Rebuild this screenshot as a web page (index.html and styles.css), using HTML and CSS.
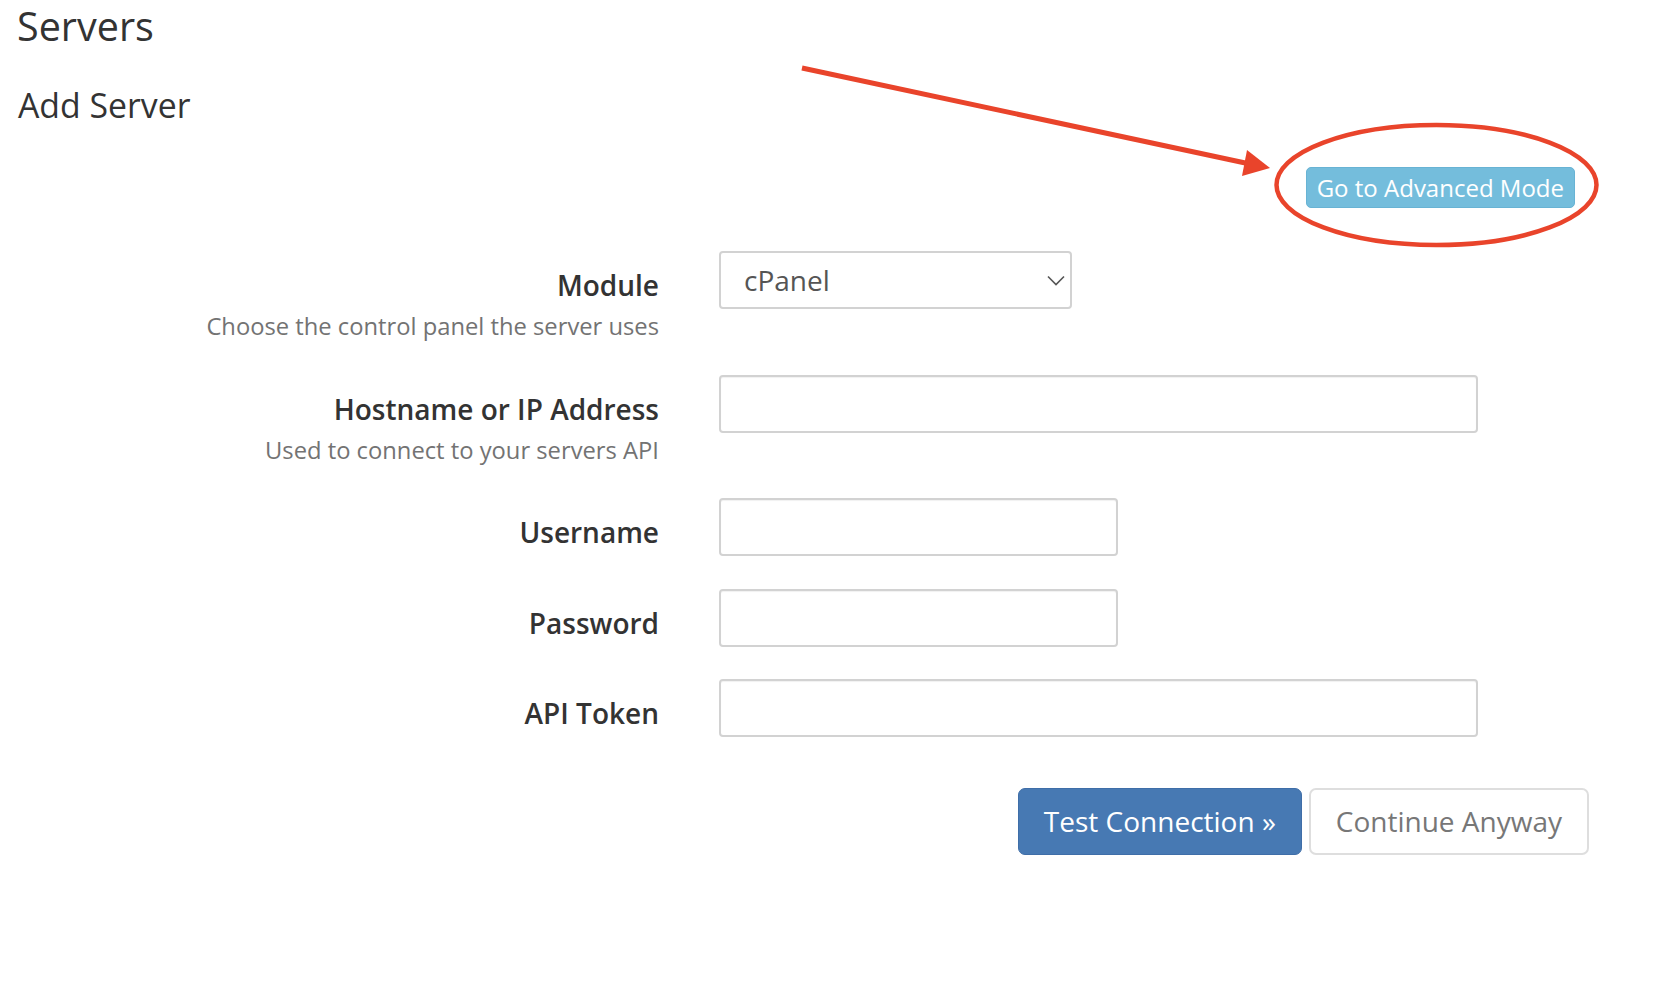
FILE: index.html
```html
<!DOCTYPE html>
<html lang="en">
<head>
<meta charset="utf-8">
<title>Servers - Add Server</title>
<link rel="stylesheet" href="styles.css">
</head>
<body>
<div class="page">
  <h1 class="title">Servers</h1>
  <h2 class="subtitle">Add Server</h2>
  <div class="mode-bar">
    <button class="btn btn-info" type="button">Go to Advanced Mode</button>
  </div>
  <form class="form">
    <div class="row">
      <div class="label-col">
        <label class="label">Module</label>
        <div class="help">Choose the control panel the server uses</div>
      </div>
      <div class="field-col">
        <div class="select-wrap">
          <select class="control select"><option>cPanel</option></select>
          <svg class="chev" width="18" height="11" viewBox="0 0 18 11"><path d="M1 1.5 L9 9.5 L17 1.5" fill="none" stroke="#555" stroke-width="1.6"/></svg>
        </div>
      </div>
    </div>
    <div class="row">
      <div class="label-col">
        <label class="label">Hostname or IP Address</label>
        <div class="help">Used to connect to your servers API</div>
      </div>
      <div class="field-col"><input class="control wide" type="text"></div>
    </div>
    <div class="row">
      <div class="label-col"><label class="label">Username</label></div>
      <div class="field-col"><input class="control narrow" type="text"></div>
    </div>
    <div class="row">
      <div class="label-col"><label class="label">Password</label></div>
      <div class="field-col"><input class="control narrow" type="password"></div>
    </div>
    <div class="row">
      <div class="label-col"><label class="label">API Token</label></div>
      <div class="field-col"><input class="control wide" type="text"></div>
    </div>
  </form>
  <div class="actions">
    <button class="btn btn-primary" type="button">Test Connection &raquo;</button>
    <button class="btn btn-default" type="button">Continue Anyway</button>
  </div>
  <svg class="annotation" width="1666" height="260" viewBox="0 0 1666 260">
    <line x1="802" y1="68" x2="1250" y2="164" stroke="#e9442b" stroke-width="5" stroke-linecap="butt"/>
    <polygon points="1270,168 1247,150 1242,176" fill="#e9442b"/>
    <ellipse cx="1436.5" cy="185" rx="160" ry="60" fill="none" stroke="#e9442b" stroke-width="4.5"/>
  </svg>
</div>
</body>
</html>
```
FILE: styles.css
```css
* { box-sizing: border-box; }
html, body { margin: 0; padding: 0; background: #fff; }
body {
  font-family: "Open Sans", "Liberation Sans", sans-serif;
  color: #333;
}
.page {
  position: relative;
  width: 1666px;
  min-height: 992px;
  padding-left: 17px;
}
.title {
  margin: 0;
  font-size: 39.5px;
  font-weight: 400;
  line-height: 53px;
}
.subtitle {
  margin: 30px 0 0;
  font-size: 33.8px;
  font-weight: 400;
  line-height: 45px;
  padding-left: 1px;
}
.mode-bar {
  display: flex;
  justify-content: flex-end;
  padding-right: 91px;
  margin-top: 39px;
}
.btn {
  font-family: "Open Sans", "Liberation Sans", sans-serif;
  border: 1px solid transparent;
  cursor: pointer;
  white-space: nowrap;
}
.btn-info {
  font-size: 24px;
  line-height: 33px;
  padding: 3px 10px;
  background: #74bddc;
  border-color: #68b3d4;
  color: #fff;
  border-radius: 5px;
}
.form {
  display: flex;
  flex-direction: column;
  gap: 32.5px;
  margin-top: 43px;
}
.row {
  display: grid;
  grid-template-columns: 642px 1fr;
  column-gap: 60px;
  align-items: start;
}
.label-col {
  text-align: right;
  padding-top: 16px;
}
.label {
  display: block;
  font-size: 28px;
  font-weight: 600;
  line-height: 36px;
  color: #333;
}
.help {
  margin-top: 7px;
  font-size: 23.75px;
  line-height: 32px;
  color: #737373;
}
.control {
  display: block;
  height: 58px;
  border: 2px solid #d2d2d2;
  border-radius: 4px;
  background: #fff;
  box-shadow: inset 0 1px 1px rgba(0, 0, 0, 0.06);
  font-family: "Open Sans", "Liberation Sans", sans-serif;
  font-size: 28px;
  color: #555;
  outline: none;
}
.wide { width: 759px; }
.narrow { width: 399px; }
.select-wrap {
  position: relative;
  width: 353px;
}
.select {
  width: 353px;
  padding: 0 40px 0 23px;
  appearance: none;
  -webkit-appearance: none;
  box-shadow: none;
}
.chev {
  position: absolute;
  left: 328px;
  top: 24px;
  pointer-events: none;
}
.actions {
  display: flex;
  justify-content: flex-end;
  gap: 7px;
  padding-right: 77px;
  margin-top: 51px;
}
.btn-primary,
.btn-default {
  font-size: 28px;
  line-height: 39px;
  padding: 13px 25px;
  border-radius: 7px;
}
.btn-primary {
  background: #4779b3;
  border-color: #3f6ea8;
  color: #fff;
}
.btn-default {
  background: #fff;
  border: 2px solid #dedede;
  padding: 12px 25px;
  color: #777;
}
.annotation {
  position: absolute;
  top: 0;
  left: 0;
  pointer-events: none;
}
```
